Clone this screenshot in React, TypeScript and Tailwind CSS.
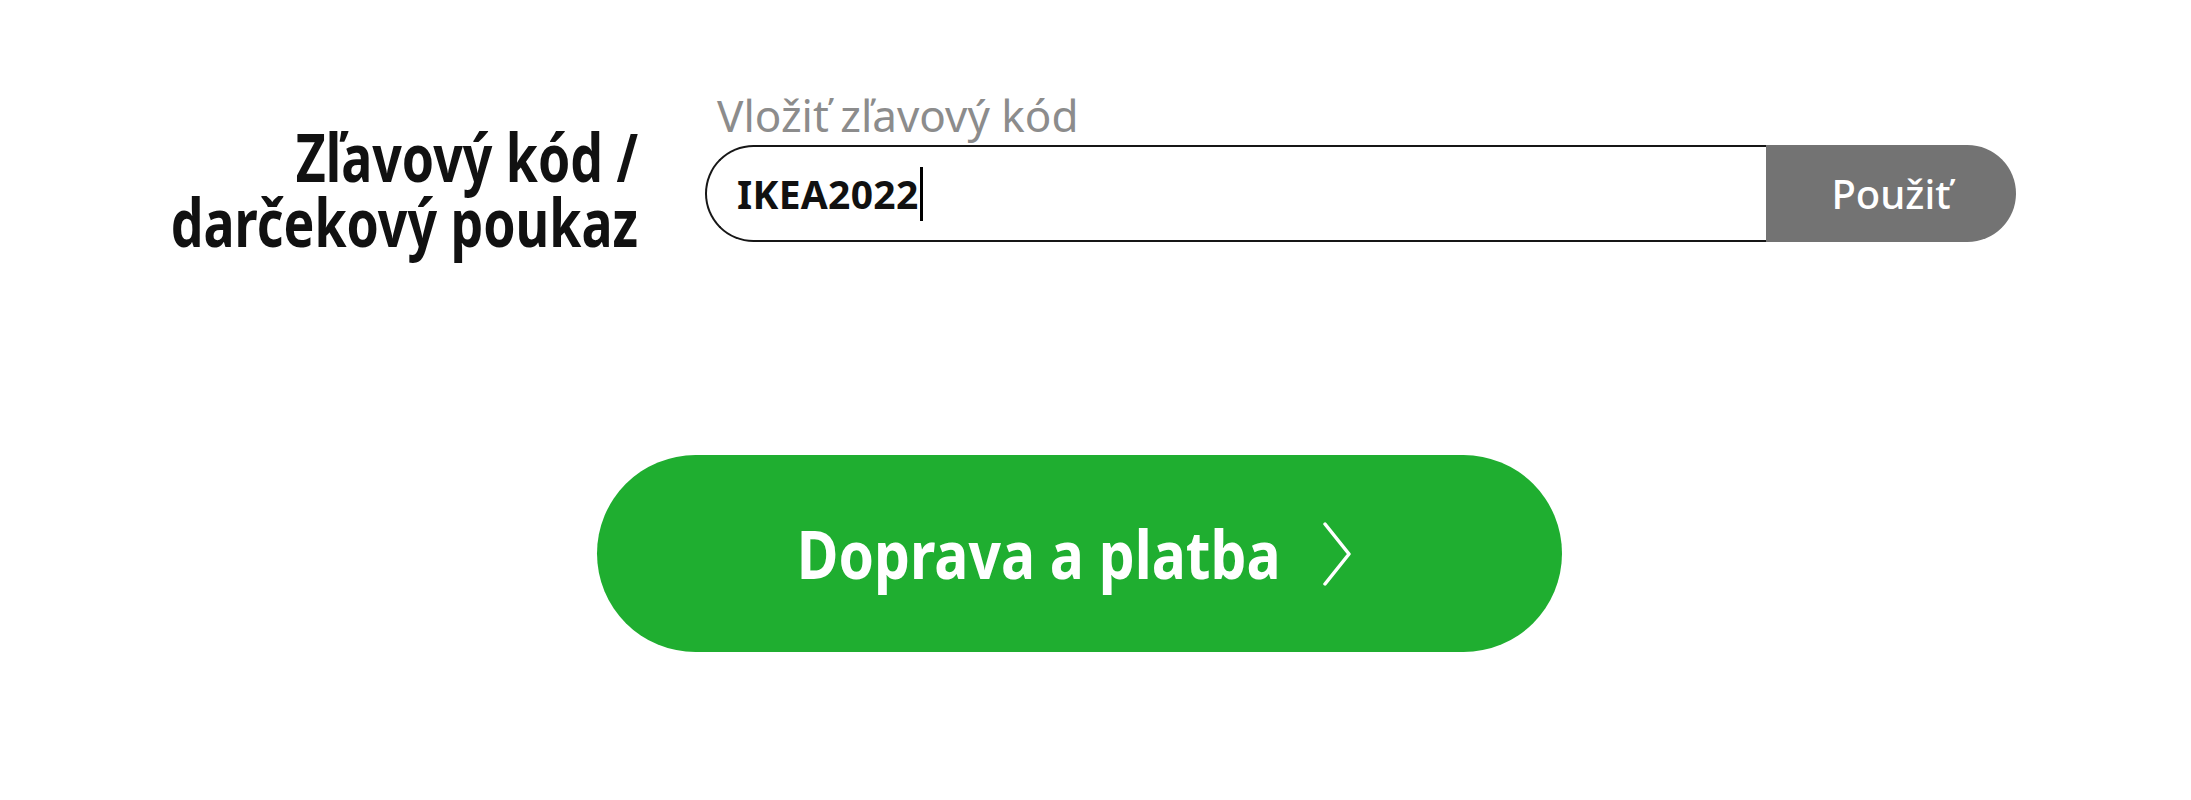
export default function App() {
  return (
    <div className="min-h-[800px] w-full bg-white font-['Noto_Sans','Open_Sans',sans-serif] text-[#111]">
      {/* Discount code row */}
      <div className="flex items-start pl-[18px] pt-[86px]">
        {/* the reference uses a condensed face; squeeze Noto Sans Bold to match */}
        <h2 className="mt-[38px] w-[620px] origin-right scale-x-[0.785] whitespace-nowrap text-right text-[66px] font-bold leading-[65px]">
          Zľavový kód /
          <br />
          darčekový poukaz
        </h2>

        <div className="ml-[67px] flex w-[1311px] flex-col">
          <label className="pl-[12px] text-[44px] leading-[59px] text-[#8c8c8c]">Vložiť zľavový kód</label>
          <div className="flex h-[97px]">
            <div className="flex flex-1 items-center rounded-l-full border-2 border-r-0 border-[#161616] pl-[30px]">
              <span className="text-[39px] font-bold leading-none tracking-[0.3px]">IKEA2022</span>
              <span className="ml-[1px] h-[54px] w-[3px] bg-black" />
            </div>
            <button className="w-[250px] rounded-r-full bg-[#737373] text-[40px] font-medium text-white">Použiť</button>
          </div>
        </div>
      </div>

      {/* Continue button */}
      <div className="flex pl-[597px] pt-[201px]">
        <button className="flex h-[197px] w-[965px] items-center justify-center gap-[40px] rounded-full bg-[#1fae30] pr-[11px] text-white">
          <span className="-mx-[42px] inline-block scale-x-[0.85] whitespace-nowrap text-[67px] font-bold leading-none">
            Doprava a platba
          </span>
          <svg width="30" height="64" viewBox="0 0 30 64" fill="none">
            <polyline points="3,2 27,32 3,62" stroke="white" strokeWidth="3.5" strokeLinecap="round" strokeLinejoin="round" />
          </svg>
        </button>
      </div>
    </div>
  );
}
